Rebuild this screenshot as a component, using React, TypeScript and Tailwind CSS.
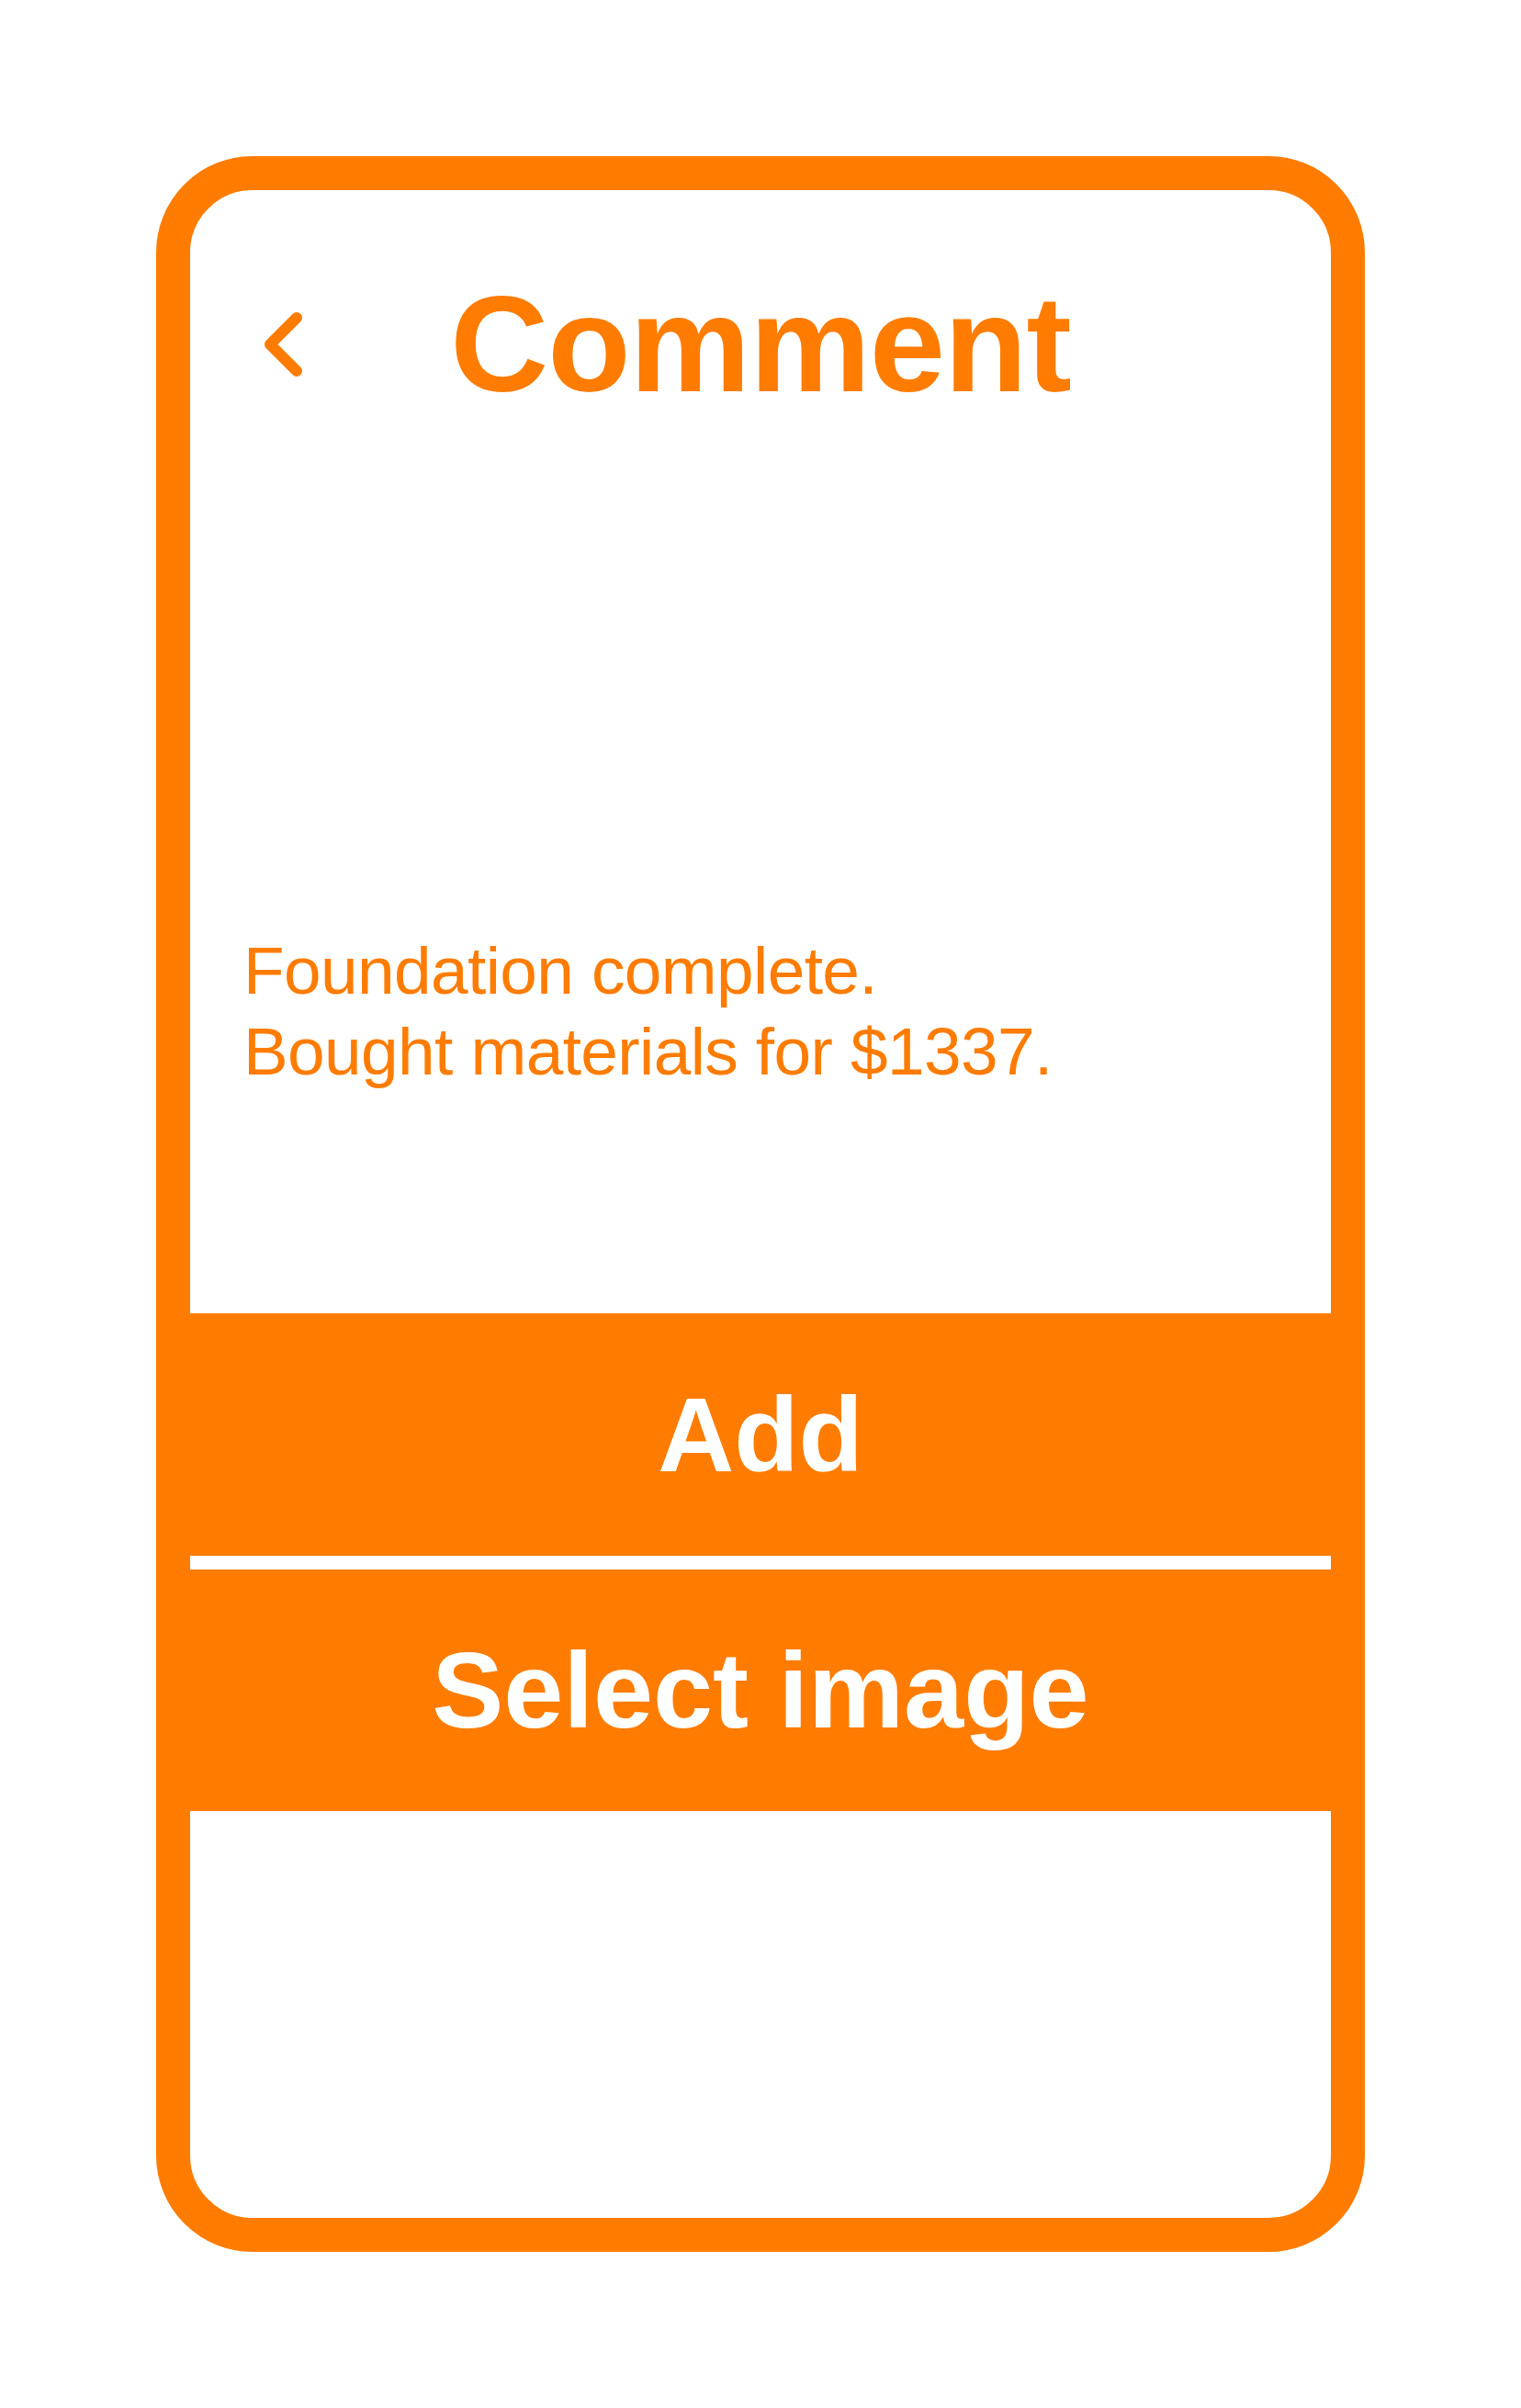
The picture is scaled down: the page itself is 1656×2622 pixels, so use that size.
const font = { fontFamily: '"Liberation Sans", Arial, sans-serif' }

function BackChevron() {
  return (
    <svg width="42" height="70" viewBox="0 0 42 70" fill="none" aria-hidden>
      <polyline
        points="35,6 6,35 35,64"
        stroke="#ff7c00"
        strokeWidth="12"
        strokeLinecap="round"
        strokeLinejoin="round"
      />
    </svg>
  )
}

export default function App() {
  return (
    <div className="w-[1656px] h-[2622px] bg-white pt-[170px] pl-[170px]" style={font}>
      {/* Phone frame */}
      <div className="w-[1316px] h-[2282px] border-[37px] border-[#ff7c00] rounded-[105px] overflow-hidden flex flex-col bg-white">
        {/* Header */}
        <div className="mt-[95px] h-[146px] grid grid-cols-[1fr_auto_1fr] items-center">
          <div className="pl-[81px] flex items-center">
            <BackChevron />
          </div>
          <h1 className="text-[148px] leading-[146px] font-bold tracking-[-1px] text-[#ff7c00]">Comment</h1>
          <div />
        </div>

        {/* Comment body */}
        <p className="mt-[565px] pl-[58px] text-[73px] leading-[88px] tracking-[-0.6px] text-[#ff7c00]">
          Foundation complete.
          <br />
          Bought materials for $1337.
        </p>

        {/* Actions */}
        <div className="mt-[241px] flex flex-col gap-[15px]">
          <button className="h-[264px] w-full bg-[#ff7c00] text-white font-bold text-[115px] leading-none flex items-center justify-center">
            Add
          </button>
          <button className="h-[263px] w-full bg-[#ff7c00] text-white font-bold text-[117px] leading-none flex items-center justify-center">
            Select image
          </button>
        </div>
      </div>
    </div>
  )
}
